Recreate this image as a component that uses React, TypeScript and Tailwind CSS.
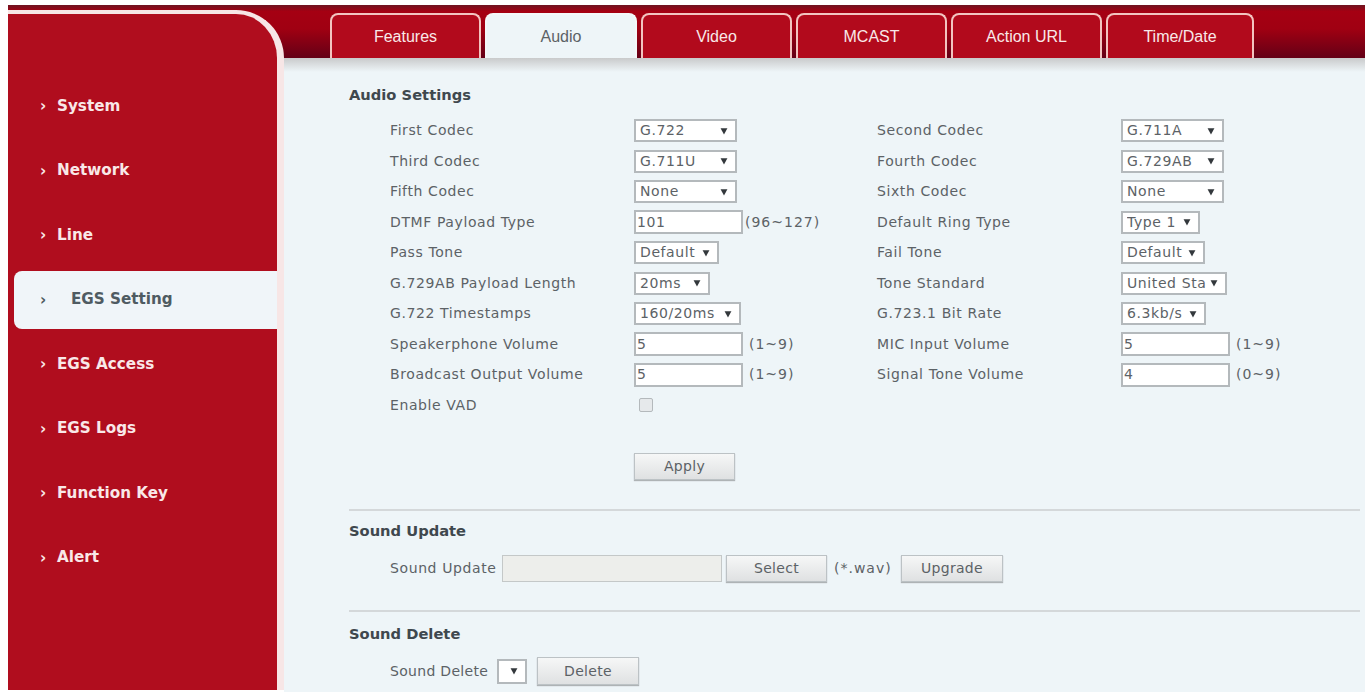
const navItems = ["System", "Network", "Line", "EGS Setting", "EGS Access", "EGS Logs", "Function Key", "Alert"];
const tabs = [
  { label: "Features", w: "w-[151px]" },
  { label: "Audio", w: "w-[152px]" },
  { label: "Video", w: "w-[151px]" },
  { label: "MCAST", w: "w-[151px]" },
  { label: "Action URL", w: "w-[151px]" },
  { label: "Time/Date", w: "w-[148px]" },
];

const box = "h-[23px] border-2 border-[#b4b9bc] bg-white text-[14px] tracking-[0.6px] text-[#5c6266] flex items-center overflow-hidden shrink-0";

function Select({ value, w }: { value: string; w: string }) {
  return (
    <div className={`${box} ${w} justify-between pl-[4px] pr-[7px]`}>
      <span className="whitespace-nowrap overflow-hidden flex-1">{value}</span>
      <svg width="8" height="8" viewBox="0 0 7 7" className="shrink-0 ml-[1px]">
        <path d="M0.5 1 H6.5 L3.5 6.5 Z" fill="#33383c" />
      </svg>
    </div>
  );
}

function Input({ value, w = "w-[109px]" }: { value: string; w?: string }) {
  return <div className={`${box} ${w} h-[24px] pl-[1px]`}>{value}</div>;
}

function Btn({ label, w, h = "h-[27px]" }: { label: string; w: string; h?: string }) {
  return (
    <div className={`${w} ${h} shrink-0 flex items-center justify-center border border-[#bcc2c5] bg-gradient-to-b from-[#f6f7f7] to-[#dfe1e2] text-[14px] tracking-[0.3px] text-[#5c6266] shadow-[0_1px_1px_#aeb3b5]`}>
      {label}
    </div>
  );
}

function Hint({ children, className = "ml-[6px]" }: { children: string; className?: string }) {
  return <span className={`${className} text-[14px] tracking-[1px] text-[#5c6266] whitespace-nowrap`}>{children}</span>;
}

function Cell({ label, children }: { label?: string; children?: React.ReactNode }) {
  return (
    <>
      <div className="text-[14px] tracking-[0.6px] text-[#5c6266] whitespace-nowrap">{label}</div>
      <div className="flex items-center">{children}</div>
    </>
  );
}

function Rows() {
  return (
    <div className="grid grid-cols-[244px_243px_244px_1fr] auto-rows-[30.5px] items-center pl-[41px] mt-[10.5px]">
      <Cell label="First Codec"><Select value="G.722" w="w-[103px]" /></Cell>
      <Cell label="Second Codec"><Select value="G.711A" w="w-[103px]" /></Cell>
      <Cell label="Third Codec"><Select value="G.711U" w="w-[103px]" /></Cell>
      <Cell label="Fourth Codec"><Select value="G.729AB" w="w-[103px]" /></Cell>
      <Cell label="Fifth Codec"><Select value="None" w="w-[103px]" /></Cell>
      <Cell label="Sixth Codec"><Select value="None" w="w-[103px]" /></Cell>
      <Cell label="DTMF Payload Type"><Input value="101" /><Hint className="ml-[2px]">(96~127)</Hint></Cell>
      <Cell label="Default Ring Type"><Select value="Type 1" w="w-[79px]" /></Cell>
      <Cell label="Pass Tone"><Select value="Default" w="w-[85px]" /></Cell>
      <Cell label="Fail Tone"><Select value="Default" w="w-[84px]" /></Cell>
      <Cell label="G.729AB Payload Length"><Select value="20ms" w="w-[76px]" /></Cell>
      <Cell label="Tone Standard"><Select value="United Sta" w="w-[106px]" /></Cell>
      <Cell label="G.722 Timestamps"><Select value="160/20ms" w="w-[107px]" /></Cell>
      <Cell label="G.723.1 Bit Rate"><Select value="6.3kb/s" w="w-[85px]" /></Cell>
      <Cell label="Speakerphone Volume"><Input value="5" /><Hint>(1~9)</Hint></Cell>
      <Cell label="MIC Input Volume"><Input value="5" /><Hint>(1~9)</Hint></Cell>
      <Cell label="Broadcast Output Volume"><Input value="5" /><Hint>(1~9)</Hint></Cell>
      <Cell label="Signal Tone Volume"><Input value="4" /><Hint>(0~9)</Hint></Cell>
      <Cell label="Enable VAD">
        <div className="ml-[5px] w-[14px] h-[14px] rounded-[2px] border border-[#b4b9bc] bg-[#e6e9eb]" />
      </Cell>
    </div>
  );
}

export default function App() {
  return (
    <div className="w-[1370px] h-[692px] overflow-hidden bg-white pt-[5px] pl-[8px] font-['DejaVu_Sans',sans-serif]">
      <div className="w-[1357px] flex h-[687px] bg-[linear-gradient(180deg,#6e1420_0%,#a50012_12%,#a00012_45%,#660016_98%)] bg-[length:100%_53px] bg-no-repeat">
        <aside className="w-[276px] shrink-0 mt-[5px] mb-[2px] bg-[#b00d1e] border-t-[4px] border-r-[7px] border-[#f7e6e6] rounded-tr-[48px] pt-[60px]">
          {navItems.map((item) =>
            item === "EGS Setting" ? (
              <div key={item} className="h-[64.5px] flex items-center">
                <div className="ml-[6px] flex-1 h-[58px] flex items-center bg-[#f0f5f9] rounded-l-[8px] pl-[26px] text-[15.2px] font-bold text-[#4f5b62]">
                  <span className="w-[31px] text-[15px]">›</span>
                  {item}
                </div>
              </div>
            ) : (
              <div key={item} className="h-[64.5px] flex items-center pl-[32px] text-[15.2px] font-bold text-[#f9e8e8]">
                <span className="w-[17px] text-[15px]">›</span>
                {item}
              </div>
            )
          )}
        </aside>
        <main className="flex-1 flex flex-col min-w-0">
          <nav className="h-[53px] shrink-0 flex items-end gap-[4px] pl-[46px] pt-[8px]">
            {tabs.map((t) => (
              <div
                key={t.label}
                className={`${t.w} h-[45px] shrink-0 flex items-center justify-center rounded-t-[8px] border-2 border-b-0 font-['Liberation_Sans',sans-serif] text-[16px] ${
                  t.label === "Audio"
                    ? "bg-[#eef5f8] border-[#f4f7f8] text-[#5c6266]"
                    : "bg-[#b20a1c] border-[#f3c4c0] text-[#f9e8e8]"
                }`}
              >
                {t.label}
              </div>
            ))}
          </nav>
          <div className="flex-1 bg-[linear-gradient(180deg,#c9cacb_0px,#eef5f8_14px)] pl-[65px] pr-[5px] pt-[27px] text-[#3f484e]">
            <h2 className="text-[14.7px] font-bold text-[#3f484e] leading-[20px]">Audio Settings</h2>
            <Rows />
            <div className="mt-[32.5px] ml-[285px]"><Btn label="Apply" w="w-[101px]" /></div>
            <div className="mt-[29px] border-t-2 border-[#d4d8da]" />
            <h2 className="mt-[10px] text-[14.7px] font-bold leading-[20px]">Sound Update</h2>
            <div className="mt-[14px] ml-[41px] flex items-center text-[14px] tracking-[0.6px] text-[#5c6266]">
              <span className="w-[112px] whitespace-nowrap">Sound Update</span>
              <div className="w-[220px] h-[27px] border border-[#c4c8c8] bg-[#edeeeb]" />
              <div className="ml-[4px]"><Btn label="Select" w="w-[101px]" /></div>
              <Hint className="ml-[7px] w-[56px] tracking-[0.6px]">(*.wav)</Hint>
              <div className="ml-[11px]"><Btn label="Upgrade" w="w-[102px]" /></div>
            </div>
            <div className="mt-[28px] border-t-2 border-[#d4d8da]" />
            <h2 className="mt-[12px] text-[14.7px] font-bold leading-[20px]">Sound Delete</h2>
            <div className="mt-[13px] ml-[41px] flex items-center text-[14px] tracking-[0.3px] text-[#5c6266]">
              <span className="w-[107px] whitespace-nowrap">Sound Delete</span>
              <Select value="" w="w-[30px] h-[25px]" />
              <div className="ml-[10px]"><Btn label="Delete" w="w-[102px]" h="h-[28px]" /></div>
            </div>
          </div>
        </main>
      </div>
    </div>
  );
}
